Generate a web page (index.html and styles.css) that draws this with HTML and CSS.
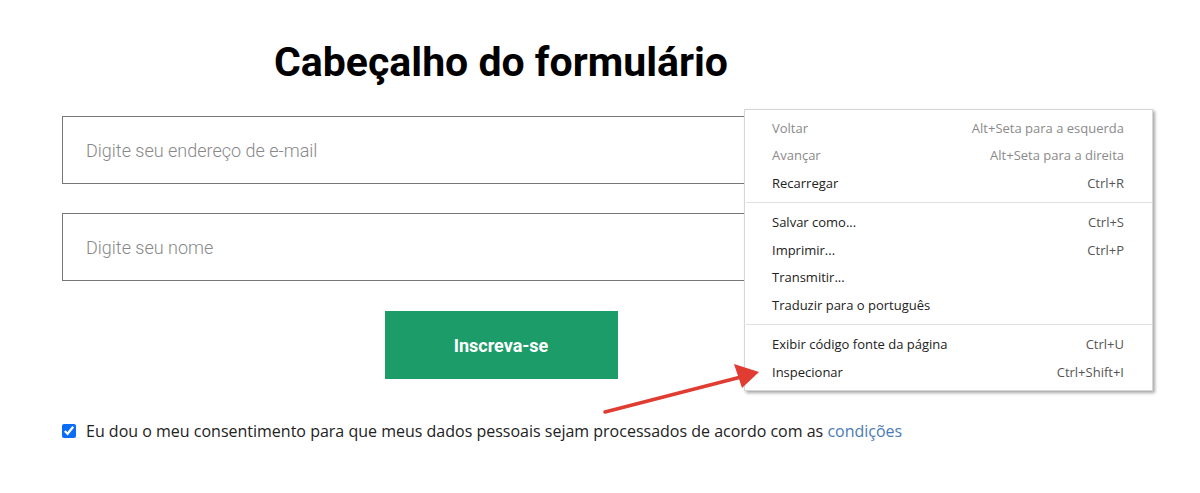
FILE: index.html
```html
<!doctype html>
<html>
<head>
<meta charset="UTF-8">
<title>Cabeçalho do formulário</title>
<link rel="stylesheet" href="styles.css">
</head>
<body>
<div class="page">
	<form class="form">
		<h1 class="title">Cabeçalho do formulário</h1>
		<input class="field" type="email" placeholder="Digite seu endereço de e-mail">
		<input class="field" type="text" placeholder="Digite seu nome">
		<div class="actions">
			<button class="btn" type="button">Inscreva-se</button>
		</div>
		<label class="consent">
			<input type="checkbox" checked>
			<span>Eu dou o meu consentimento para que meus dados pessoais sejam processados de acordo com as <a href="javascript:;">condições</a></span>
		</label>
	</form>

	<ul class="menu">
		<li class="off"><span>Voltar</span><em>Alt+Seta para a esquerda</em></li>
		<li class="off"><span>Avançar</span><em>Alt+Seta para a direita</em></li>
		<li><span>Recarregar</span><em>Ctrl+R</em></li>
		<li class="sep"></li>
		<li><span>Salvar como...</span><em>Ctrl+S</em></li>
		<li><span>Imprimir...</span><em>Ctrl+P</em></li>
		<li><span>Transmitir...</span><em></em></li>
		<li><span>Traduzir para o português</span><em></em></li>
		<li class="sep"></li>
		<li><span>Exibir código fonte da página</span><em>Ctrl+U</em></li>
		<li><span>Inspecionar</span><em>Ctrl+Shift+I</em></li>
	</ul>

	<svg class="arrow" width="180" height="60" viewBox="0 0 180 60">
		<line x1="4" y1="53" x2="140" y2="18" stroke="#e03c31" stroke-width="3.5" stroke-linecap="round"/>
		<polygon points="158,13 133,5 141,29" fill="#e03c31"/>
	</svg>
</div>
</body>
</html>
```

FILE: styles.css
```css
*{ margin:0; padding:0; box-sizing:border-box; }
body{ background:#fff; font-family:Roboto, "Liberation Sans", sans-serif; }
.page{ position:relative; width:1200px; height:493px; }

.form{ width:878px; margin-left:62px; padding-top:38px; display:flex; flex-direction:column; }
.title{ font-size:41px; font-weight:700; color:#000; text-align:center; line-height:48px; margin-bottom:30px; }
.field{ height:68px; border:1px solid #777; padding:0 23px; font-family:Roboto, sans-serif; font-size:18px; font-weight:300; color:#333; margin-bottom:29px; outline:none; }
.field::placeholder{ color:#888; }
.actions{ display:flex; justify-content:center; margin-top:1px; }
.btn{ width:233px; height:68px; border:0; background:#1b9c69; color:#fff; font-family:Roboto, sans-serif; font-size:18px; font-weight:700; cursor:pointer; }
.consent{ display:flex; align-items:center; gap:10px; margin-top:41px; font-family:"Open Sans", sans-serif; font-size:16px; color:#222; }
.consent input{ width:14px; height:14px; margin:0; accent-color:#0b6cf5; }
.consent a{ color:#4b7bb4; text-decoration:none; }

.menu{ position:absolute; left:744px; top:109px; width:409px; padding:4px 0; list-style:none; background:#fff; border:1px solid #d6d6d6; box-shadow:2px 2px 3px rgba(0,0,0,0.35); font-family:"Open Sans", sans-serif; font-size:13px; color:#222; }
.menu li{ display:flex; justify-content:space-between; align-items:center; height:27.5px; padding:0 28px 0 27px; }
.menu li em{ font-style:normal; color:#555; }
.menu li.off span, .menu li.off em{ color:#8a8a8a; }
.menu li.sep{ height:1px; padding:0; margin:5px 0 6px 1px; background:#e0e0e0; }

.arrow{ position:absolute; left:601px; top:359px; }
```
